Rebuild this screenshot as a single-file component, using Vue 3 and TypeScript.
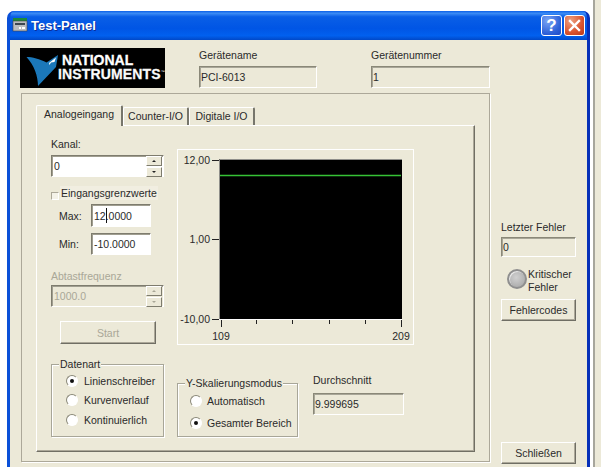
<script setup lang="ts">
const dataTypes = [
  { label: 'Linienschreiber', on: true },
  { label: 'Kurvenverlauf', on: false },
  { label: 'Kontinuierlich', on: false },
]
const scaleModes = [
  { label: 'Automatisch', on: false },
  { label: 'Gesamter Bereich', on: true },
]
const xTicks = [221, 256, 292, 329, 365, 401]
const yLabels = [
  { text: '12,00', y: 160 },
  { text: '1,00', y: 239 },
  { text: '-10,00', y: 319 },
]
</script>

<template>
  <div class="screen">
    <div class="window">
      <div class="title">
        <svg class="app-icon" width="16" height="14" viewBox="0 0 16 14">
          <rect x="1" y="0" width="14" height="3" fill="#1c8a3c" />
          <rect x="1" y="3" width="14" height="10" fill="#b9bcc0" stroke="#444" stroke-width="0.6" />
          <rect x="3" y="5" width="10" height="2" fill="#3c4650" />
          <rect x="7" y="9" width="2" height="2" fill="#fff" />
          <rect x="10" y="9" width="3" height="2" fill="#fff" />
        </svg>
        <span class="title-text">Test-Panel</span>
        <span class="cap help">?</span>
        <span class="cap close">
          <svg width="13" height="13" viewBox="0 0 13 13">
            <path d="M2 2 L11 11 M11 2 L2 11" stroke="#fff" stroke-width="2.4" stroke-linecap="square" />
          </svg>
        </span>
      </div>

      <div class="client">
        <div class="top-row">
          <div class="logo">
            <svg width="38" height="40" viewBox="0 0 38 40">
              <path d="M6.5 9 C12 9 20 11 26.5 14.5 L38 7 L36 19 L18 38 C18 28 14 17 6.5 9 Z" fill="#1b78ba" />
              <path d="M29 15 L36 9.5 L34.5 14 L31 14.5 L29.5 17 Z" fill="#fff" />
            </svg>
            <div class="logo-text">
              <span class="logo-a">NATIONAL</span>
              <span class="logo-b">INSTRUMENTS<sup>™</sup></span>
            </div>
          </div>
          <div class="field device-name">
            <div class="label">Gerätename</div>
            <div class="readout">PCI-6013</div>
          </div>
          <div class="field device-number">
            <div class="label">Gerätenummer</div>
            <div class="readout">1</div>
          </div>
        </div>

        <div class="main-row">
          <div class="outer">
            <div class="tabs">
              <div class="tab active">Analogeingang</div>
              <div class="tab">Counter-I/O</div>
              <div class="tab">Digitale I/O</div>
            </div>
            <div class="panel">
              <div class="col-left">
                <div class="label kanal">Kanal:</div>
                <div class="input spin">
                  <span class="spin-value">0</span>
                  <span class="spin-btns"><i class="up"></i><i class="down"></i></span>
                </div>

                <div class="check-row">
                  <span class="check"></span>
                  <span class="check-label">Eingangsgrenzwerte</span>
                </div>
                <div class="limit limit-max">
                  <span class="limit-label">Max:</span>
                  <div class="input limit-input">12<b class="caret"></b>.0000</div>
                </div>
                <div class="limit limit-min">
                  <span class="limit-label">Min:</span>
                  <div class="input limit-input">-10.0000</div>
                </div>

                <div class="label disabled abtast">Abtastfrequenz</div>
                <div class="input spin off">
                  <span class="spin-value">1000.0</span>
                  <span class="spin-btns"><i class="up"></i><i class="down"></i></span>
                </div>

                <div class="btn start">Start</div>

                <div class="group datenart">
                  <div class="legend">Datenart</div>
                  <div v-for="r in dataTypes" :key="r.label" class="radio-row">
                    <span class="radio" :class="{ on: r.on }"></span>
                    <span>{{ r.label }}</span>
                  </div>
                </div>
              </div>

              <div class="col-mid">
                <div class="graph">
                  <svg width="237" height="196" viewBox="177 149 237 196">
                    <rect x="219" y="159" width="183" height="160" fill="#000" />
                    <path d="M219.5 319 V159.5 H402" fill="none" stroke="#8f8f8a" />
                    <path d="M219 319.5 H402" stroke="#fff" />
                    <path d="M220 175.5 H401" stroke="#36c236" stroke-width="1.5" />
                    <g stroke="#222">
                      <path d="M212 160.5 H219 M212 239.5 H219 M212 319.5 H219" />
                      <path v-for="x in xTicks" :key="x" :d="`M${x + 0.5} 320 V${x === 221 || x === 401 ? 327 : 324}`" />
                    </g>
                    <text v-for="l in yLabels" :key="l.text" class="tick-label" x="210" :y="l.y + 4" text-anchor="end">{{ l.text }}</text>
                    <text class="tick-label" x="221" y="340" text-anchor="middle">109</text>
                    <text class="tick-label" x="401" y="340" text-anchor="middle">209</text>
                  </svg>
                </div>
                <div class="lower">
                  <div class="group scale">
                    <div class="legend">Y-Skalierungsmodus</div>
                    <div v-for="r in scaleModes" :key="r.label" class="radio-row">
                      <span class="radio" :class="{ on: r.on }"></span>
                      <span>{{ r.label }}</span>
                    </div>
                  </div>
                  <div class="field average">
                    <div class="label">Durchschnitt</div>
                    <div class="readout">9.999695</div>
                  </div>
                </div>
              </div>
            </div>
          </div>

          <div class="col-right">
            <div class="label err-label">Letzter Fehler</div>
            <div class="readout err">0</div>
            <div class="led-row">
              <span class="led"></span>
              <span class="led-text">Kritischer<br />Fehler</span>
            </div>
            <div class="btn">Fehlercodes</div>
            <div class="btn closing">Schließen</div>
          </div>
        </div>
      </div>
    </div>
    <div class="neighbor"></div>
  </div>
</template>

<style>
html, body { margin: 0; background: #fff; }
</style>

<style scoped>
.screen {
  width: 601px;
  height: 467px;
  overflow: hidden;
  display: flex;
  background: #fff;
  font-family: "Liberation Sans", Arial, sans-serif;
  font-size: 10.5px;
  line-height: 14px;
  color: #2a2a2a;
}
.window {
  width: 583px;
  height: 456px;
  margin: 11px 0 0 7px;
  flex: none;
  display: flex;
  flex-direction: column;
  background: #0831d9;
  border-radius: 7px 7px 0 0;
  overflow: hidden;
  border-left: 3px solid #0a50d8;
  border-right: 3px solid #0730b8;
  box-sizing: border-box;
}
.neighbor {
  margin-left: 3px;
  width: 8px;
  flex: none;
  background: #ece9d8;
  border-left: 2px solid #a7a69c;
  box-sizing: border-box;
}
.title {
  height: 29px;
  margin: 0 -3px;
  flex: none;
  display: flex;
  align-items: center;
  padding: 0 5px 0 5px;
  background: linear-gradient(180deg, #0a5fe8 0%, #3c8cf5 8%, #0a5fe6 20%, #0055e5 60%, #0160ef 85%, #0048c8 100%);
}
.app-icon { flex: none; margin-bottom: 1px; }
.title-text {
  margin-left: 3px;
  color: #fff;
  font: bold 13px "Liberation Sans", sans-serif;
  text-shadow: 1px 1px 0 #0b2f9a;
  flex: 1;
}
.cap {
  width: 21px;
  height: 21px;
  box-sizing: border-box;
  border: 1px solid #fff;
  border-radius: 3px;
  display: flex;
  align-items: center;
  justify-content: center;
  flex: none;
}
.help {
  background: radial-gradient(circle at 30% 25%, #7aa5f5, #2f62d8 65%, #2049c4);
  color: #fff;
  font: bold 17px "Liberation Sans", sans-serif;
}
.close {
  margin-left: 2px;
  background: radial-gradient(circle at 30% 25%, #eda080, #d9532e 60%, #b8381a);
}
.client {
  flex: 1;
  background: #ece9d8;
  padding-left: 10px;
  min-height: 0;
}
.top-row {
  display: flex;
  height: 40px;
  margin-top: 8px;
}
.logo {
  width: 145px;
  height: 40px;
  background: #000;
  display: flex;
  align-items: center;
  flex: none;
}
.logo svg { flex: none; }
.logo-text {
  display: flex;
  flex-direction: column;
  margin-top: -2px;
  color: #fff;
  font-family: "Liberation Sans", sans-serif;
  font-weight: bold;
  font-size: 14px;
  line-height: 14px;
  white-space: nowrap;
  -webkit-text-stroke: 0.3px #fff;
}
.logo-a { margin-left: 4px; }
.logo-b { letter-spacing: 0.15px; -webkit-text-stroke: 0.3px #e8e8e8; }
.logo-b sup { font-size: 4px; font-weight: normal; vertical-align: 6px; line-height: 0; -webkit-text-stroke: 0; }
.field { display: flex; flex-direction: column; }
.device-name { width: 118px; margin-left: 34px; }
.device-number { width: 119px; margin-left: 54px; }
.label { height: 18px; white-space: nowrap; box-sizing: border-box; }
.readout {
  height: 22px;
  box-sizing: border-box;
  border: 1px solid;
  border-color: #8a8878 #fff #fff #8a8878;
  box-shadow: inset 1px 1px 0 #a8a698;
  padding: 3px 0 0 1px;
  background: #ece9d8;
}
.main-row { display: flex; margin-top: 5px; }
.outer {
  width: 469px;
  height: 369px;
  margin-left: 1px;
  box-sizing: border-box;
  border: 1px solid #aca899;
  box-shadow: 1px 1px 0 #fff;
  padding: 11px 0 0 14px;
}
.tabs { display: flex; height: 20px; align-items: flex-end; }
.tab {
  width: 66px;
  height: 18px;
  box-sizing: border-box;
  padding-top: 1px;
  text-align: center;
  border-top: 1px solid #fff;
  border-left: 1px solid #fff;
  border-right: 2px solid #77766c;
  border-radius: 2px 2px 0 0;
  white-space: nowrap;
}
.tab.active {
  height: 21px;
  width: 87px;
  margin-bottom: -1px;
  padding-top: 1px;
  background: #ece9d8;
  position: relative;
  z-index: 1;
}
.panel {
  width: 439px;
  height: 327px;
  box-sizing: border-box;
  border-style: solid;
  border-color: #fff #716f64 #716f64 #fff;
  border-width: 1px;
  box-shadow: inset -1px -1px 0 #aca899;
  display: flex;
  padding-left: 14px;
}
.col-left { width: 113px; flex: none; display: flex; flex-direction: column; }
.kanal { margin-top: 11px; }
.input {
  height: 22px;
  box-sizing: border-box;
  background: #fff;
  border: 1px solid;
  border-color: #7e7c6e #fff #fff #7e7c6e;
  box-shadow: inset 1px 1px 0 #a09e90;
}
.spin { display: flex; align-items: center; justify-content: space-between; padding: 0 1px 0 2px; }
.spin.off { background: #ece9d8; color: #a9a797; }
.spin-btns { display: flex; flex-direction: column; gap: 1px; width: 16px; }
.spin-btns i {
  height: 8px;
  display: block;
  position: relative;
  background: #ece9d8;
  border: 1px solid;
  border-color: #fff #7e7c6e #7e7c6e #fff;
}
.spin-btns i::after {
  content: "";
  width: 0;
  height: 0;
  display: block;
  margin: 3px auto 0;
  border-left: 2px solid transparent;
  border-right: 2px solid transparent;
}
.spin-btns .up::after { border-bottom: 2px solid #222; }
.spin-btns .down::after { border-top: 2px solid #222; }
.spin.off .up::after { border-bottom-color: #a9a797; }
.spin.off .down::after { border-top-color: #a9a797; }
.check-row { display: flex; height: 14px; margin-top: 9px; }
.check {
  width: 8px;
  height: 8px;
  margin-top: 6px;
  flex: none;
  box-sizing: border-box;
  border: 1px solid;
  border-color: #aca899 #fff #fff #aca899;
  background: #f4f2e8;
}
.check-label { margin-left: 1px; padding: 0 1px; white-space: nowrap; background: #f1eee1; }
.limit { display: flex; align-items: center; margin-left: 8px; }
.limit-max { height: 23px; margin-top: 4px; }
.limit-min { height: 22px; margin-top: 6px; }
.limit-label { width: 32px; flex: none; }
.limit-input { width: 60px; height: 100%; padding: 3px 0 0 2px; white-space: nowrap; }
.caret {
  display: inline-block;
  width: 1px;
  height: 15px;
  margin: 0 -1px 0 0;
  vertical-align: -3px;
  background: #111;
}
.disabled { color: #a9a797; }
.abtast { margin-top: 14px; height: 16px; }
.btn {
  height: 22px;
  box-sizing: border-box;
  display: flex;
  align-items: center;
  justify-content: center;
  background: #ece9d8;
  border: 1px solid;
  border-color: #fff #6f6e64 #6f6e64 #fff;
  box-shadow: inset -1px -1px 0 #aca899;
}
.start { width: 96px; height: 23px; margin: 14px 0 0 9px; color: #a9a797; }
.group {
  box-sizing: border-box;
  border: 1px solid #a8a698;
  box-shadow: 1px 1px 0 #fff, inset 1px 1px 0 #fff;
}
.legend {
  width: fit-content;
  margin: -8px 0 0 8px;
  padding: 0 1px;
  height: 14px;
  background: #ece9d8;
  white-space: nowrap;
}
.datenart { height: 73px; margin-top: 20px; padding: 0 0 0 14px; }
.datenart .legend { margin-left: -7px; }
.radio-row { display: flex; align-items: center; height: 19.5px; white-space: nowrap; }
.radio {
  width: 12px;
  height: 12px;
  flex: none;
  margin-right: 6px;
  border-radius: 50%;
  background: #fff;
  box-sizing: border-box;
  border: 1px solid;
  border-color: #8a8878 #fff #fff #8a8878;
  display: flex;
  align-items: center;
  justify-content: center;
}
.radio.on::after {
  content: "";
  width: 4px;
  height: 4px;
  border-radius: 50%;
  background: #111;
}
.col-mid { margin-left: 13px; width: 237px; flex: none; display: flex; flex-direction: column; }
.graph {
  width: 237px;
  height: 196px;
  margin-top: 23px;
  box-sizing: border-box;
  overflow: hidden;
  outline: 1px solid #fff;
  outline-offset: -1px;
  border-right: 1px solid #a09e90;
  border-bottom: 1px solid #a09e90;
}
.tick-label { font: 10.5px "Liberation Sans", sans-serif; fill: #2a2a2a; }
.lower { display: flex; align-items: flex-start; }
.scale { width: 121px; height: 54px; margin-top: 38px; padding-left: 12px; }
.scale .legend { margin-left: -5px; }
.scale .radio-row { height: 22px; }
.scale .radio { margin-right: 5px; }
.average { width: 91px; margin: 28px 0 0 15px; }
.average .label { height: 20px; }
.col-right {
  width: 75px;
  height: 371px;
  margin-left: 11px;
  display: flex;
  flex-direction: column;
}
.err-label { margin-top: 127px; height: 17px; }
.err { height: 20px; padding-top: 2px; }
.led-row { display: flex; height: 26px; margin: 12px 0 4px 6px; }
.led {
  width: 20px;
  height: 20px;
  flex: none;
  box-sizing: border-box;
  border-radius: 50%;
  border: 2px solid #8f8f8f;
  background: radial-gradient(circle at 45% 40%, #d0d0d0, #b0b0b0 70%, #8f8f8f);
  box-shadow: inset 1px 1px 0 #e8e8e8;
}
.led-text { margin-left: 1px; line-height: 13px; margin-top: -1px; }
.closing { margin-top: auto; }
</style>
